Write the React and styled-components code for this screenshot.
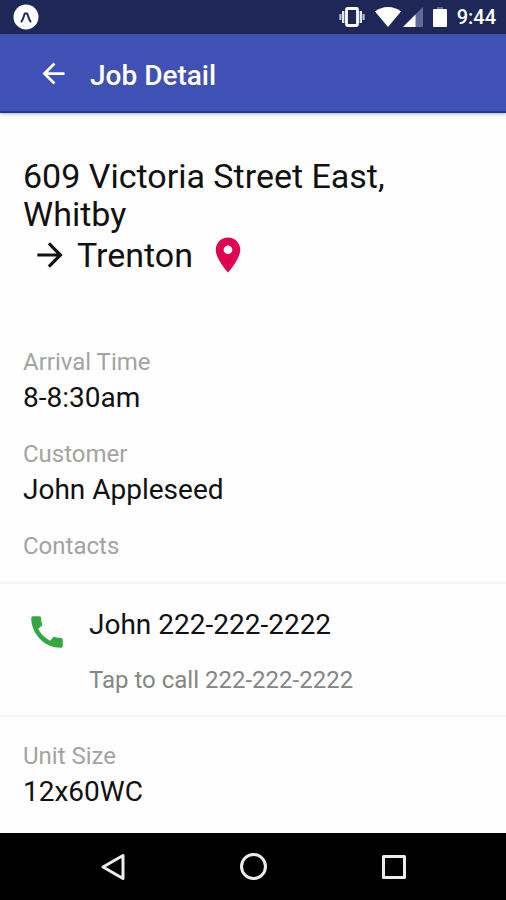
import React from 'react';
import styled, { createGlobalStyle } from 'styled-components';
import {
  MdArrowBack,
  MdArrowForward,
  MdCall,
  MdLocationOn,
} from 'react-icons/md';

const job = {
  from: '609 Victoria Street East, Whitby',
  to: 'Trenton',
  details: [
    { label: 'Arrival Time', value: '8-8:30am' },
    { label: 'Customer', value: 'John Appleseed' },
  ],
  contacts: [{ name: 'John', phone: '222-222-2222' }],
  unit: [{ label: 'Unit Size', value: '12x60WC' }],
};

const StatusBar = () => (
  <StyledStatusBar>
    <svg width="26" height="26" viewBox="0 0 26 26" aria-hidden="true">
      <circle cx="13" cy="13" r="12.5" fill="#fff" />
      <path
        d="M8.500 17.500C10 16 10.500 13 11.800 9.500h2.400C15.500 13 16 16 17.500 17.500"
        fill="none"
        stroke="#1e2757"
        strokeWidth="2"
        strokeLinecap="round"
        strokeLinejoin="round"
      />
    </svg>
    <StyledStatusIcons>
      <svg width="26" height="20" viewBox="0 0 26 20" aria-hidden="true">
        <rect x="7.500" y="1.500" width="11" height="17" rx="1" fill="none" stroke="#fff" strokeWidth="2.800" />
        <path d="M4.200 4v12M21.800 4v12" stroke="#e4e5ee" strokeWidth="2.400" />
        <path d="M1.400 7v6M24.600 7v6" stroke="#b9bccf" strokeWidth="2.200" />
      </svg>
      <StyledSignals>
        <svg width="26" height="20" viewBox="0 0 26 20" aria-hidden="true">
          <path d="M0 4.500C3.500 1.500 8 0 13 0s9.500 1.500 13 4.500L13 20z" fill="#fff" />
        </svg>
        <svg width="20" height="20" viewBox="0 0 20 20" aria-hidden="true">
          <path d="M20 0v20H0z" fill="#626995" />
          <path d="M12.500 7.500V20H0z" fill="#fff" />
        </svg>
      </StyledSignals>
      <svg width="14" height="20" viewBox="0 0 14 20" aria-hidden="true">
        <path d="M4 0h6v3H4z" fill="#626995" />
        <rect y="2" width="14" height="18" rx="1" fill="#fff" />
      </svg>
      <StyledClock>9:44</StyledClock>
    </StyledStatusIcons>
  </StyledStatusBar>
);

const DetailList = ({ items }) => (
  <StyledDetails>
    {items.map(({ label, value }) => (
      <div key={label}>
        <StyledLabel as="dt">{label}</StyledLabel>
        <StyledValue>{value}</StyledValue>
      </div>
    ))}
  </StyledDetails>
);

const NavBar = () => (
  <StyledNav>
    <StyledNavButton type="button" aria-label="Back">
      <svg width="28" height="28" viewBox="0 0 28 28">
        <path d="M5 14L25 2.500v23z" />
      </svg>
    </StyledNavButton>
    <StyledNavButton type="button" aria-label="Home">
      <svg width="28" height="28" viewBox="0 0 28 28">
        <circle cx="14.500" cy="13.500" r="12" />
      </svg>
    </StyledNavButton>
    <StyledNavButton type="button" aria-label="Overview">
      <svg width="28" height="28" viewBox="0 0 28 28">
        <rect x="3.500" y="3.500" width="21" height="21" />
      </svg>
    </StyledNavButton>
  </StyledNav>
);

const App = () => {
  return (
    <StyledScreen>
      <GlobalStyle />
      <StatusBar />
      <StyledHeader>
        <StyledBackButton type="button" aria-label="Go back">
          <MdArrowBack size={33} />
        </StyledBackButton>
        <StyledTitle>Job Detail</StyledTitle>
      </StyledHeader>
      <StyledMain>
        <StyledAddress>
          {job.from}
          <StyledDestination>
            <MdArrowForward size={38} />
            <span>{job.to}</span>
            <StyledPin size={42} />
          </StyledDestination>
        </StyledAddress>
        <DetailList items={job.details} />
        <StyledContactsTitle>Contacts</StyledContactsTitle>
        <StyledContacts>
          {job.contacts.map(({ name, phone }) => (
            <li key={phone}>
              <StyledContact href={`tel:${phone}`}>
                <MdCall size={42} color="#32a843" />
                <div>
                  <StyledContactName>
                    {name} {phone}
                  </StyledContactName>
                  <StyledContactHint>Tap to call {phone}</StyledContactHint>
                </div>
              </StyledContact>
            </li>
          ))}
        </StyledContacts>
        <DetailList items={job.unit} />
      </StyledMain>
      <NavBar />
    </StyledScreen>
  );
};

const GlobalStyle = createGlobalStyle`
  * {
    box-sizing: border-box;
  }

  body {
    margin: 0;
    background-color: #fefefe;
    font-family: Roboto, "Liberation Sans", sans-serif;
    color: #111;
  }

  svg {
    display: block;
    flex-shrink: 0;
  }

  button {
    padding: 0;
    border: 0;
    background: none;
    color: inherit;
    cursor: pointer;
  }
`;

const StyledScreen = styled.div`
  display: flex;
  flex-direction: column;
  min-height: 100vh;
`;

const StyledStatusBar = styled.div`
  display: flex;
  align-items: center;
  justify-content: space-between;
  height: 34px;
  padding: 0 10px 0 13px;
  background-color: #1e2757;
  color: #fff;
`;

const StyledStatusIcons = styled.div`
  display: flex;
  align-items: center;
  gap: 10px;
`;

const StyledSignals = styled.div`
  display: flex;
  gap: 2px;
`;

const StyledClock = styled.span`
  font-size: 20px;
  font-weight: 500;
`;

const StyledHeader = styled.header`
  display: flex;
  align-items: center;
  gap: 20px;
  height: 79px;
  padding: 2px 37px 0;
  background-color: #3f51b5;
  border-bottom: 2px solid #1c36a6;
  box-shadow: 0 1px 3px rgba(0, 0, 0, 0.3);
  color: #fff;
`;

const StyledBackButton = styled.button`
  display: flex;
`;

const StyledTitle = styled.h1`
  margin: 0;
  padding-top: 4px;
  font-size: 28px;
  font-weight: 500;
  line-height: 32px;
`;

const StyledMain = styled.main`
  flex: 1;
  padding: 44px 0 24px;
`;

const StyledAddress = styled.h2`
  margin: 0 0 72px;
  padding: 0 100px 0 23px;
  font-size: 34px;
  font-weight: 400;
  line-height: 38px;
`;

const StyledDestination = styled.span`
  display: flex;
  align-items: center;
  gap: 8px;
  height: 43px;
  padding-left: 8px;
`;

const StyledPin = styled(MdLocationOn)`
  margin-left: 6px;
  color: #e00250;
`;

const StyledDetails = styled.dl`
  display: flex;
  flex-direction: column;
  gap: 25px;
  margin: 0;
  padding: 0 23px;
`;

const StyledLabel = styled.h3`
  margin: 0;
  color: #a3a3a3;
  font-size: 24px;
  font-weight: 400;
  line-height: 28px;
`;

const StyledValue = styled.dd`
  margin: 5px 0 0;
  font-size: 28px;
  line-height: 34px;
`;

const StyledContactsTitle = styled(StyledLabel)`
  margin: 25px 23px 22px;
`;

const StyledContacts = styled.ul`
  margin: 0 0 25px;
  padding: 0;
  list-style: none;
  border-top: 2px solid #f5f5f5;

  li {
    border-bottom: 2px solid #f5f5f5;
  }
`;

const StyledContact = styled.a`
  display: flex;
  gap: 21px;
  padding: 24px 26px 21px;
  color: inherit;
  text-decoration: none;

  svg {
    margin-top: 3px;
  }
`;

const StyledContactName = styled.p`
  margin: 0 0 24px;
  font-size: 28px;
  line-height: 34px;
`;

const StyledContactHint = styled.p`
  margin: 0;
  color: #858585;
  font-size: 24px;
  line-height: 28px;
`;

const StyledNav = styled.nav`
  display: grid;
  grid-template-columns: repeat(3, 1fr);
  height: 67px;
  padding: 0 42px;
  background-color: #000;
`;

const StyledNavButton = styled.button`
  display: flex;
  align-items: center;
  justify-content: center;

  svg {
    fill: none;
    stroke: #ececec;
    stroke-width: 3px;
    stroke-linejoin: round;
  }
`;

export default App;
